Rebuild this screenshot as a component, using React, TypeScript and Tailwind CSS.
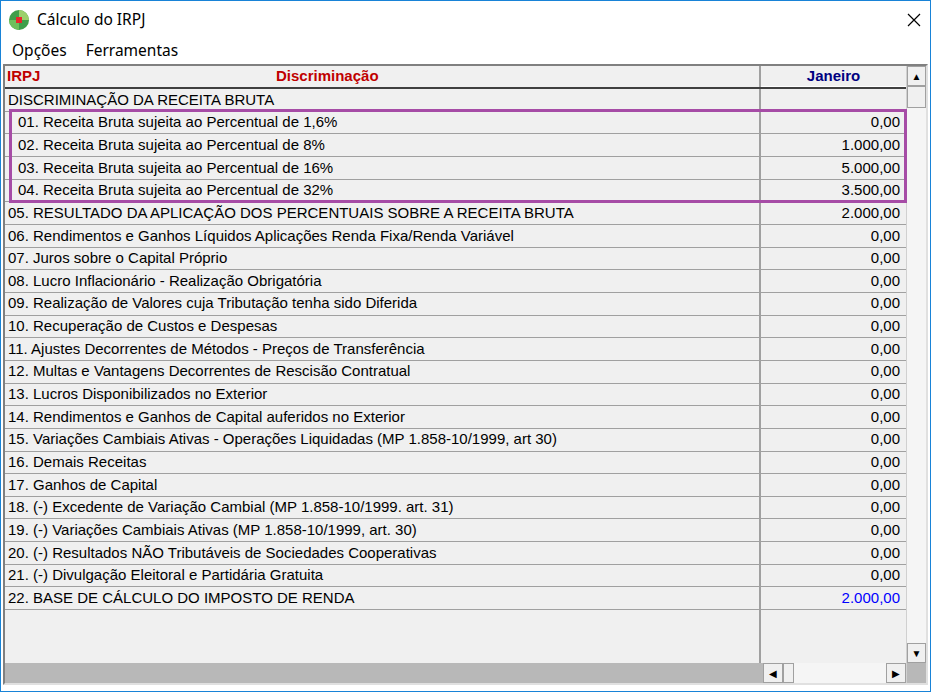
import React from "react";

const rows: [string, string, boolean?][] = [
  ["01. Receita Bruta sujeita ao Percentual de 1,6%", "0,00"],
  ["02. Receita Bruta sujeita ao Percentual de 8%", "1.000,00"],
  ["03. Receita Bruta sujeita ao Percentual de 16%", "5.000,00"],
  ["04. Receita Bruta sujeita ao Percentual de 32%", "3.500,00"],
  ["05. RESULTADO DA APLICAÇÃO DOS PERCENTUAIS SOBRE A RECEITA BRUTA", "2.000,00"],
  ["06. Rendimentos e Ganhos Líquidos Aplicações Renda Fixa/Renda Variável", "0,00"],
  ["07. Juros sobre o Capital Próprio", "0,00"],
  ["08. Lucro Inflacionário - Realização Obrigatória", "0,00"],
  ["09. Realização de Valores cuja Tributação tenha sido Diferida", "0,00"],
  ["10. Recuperação de Custos e Despesas", "0,00"],
  ["11. Ajustes Decorrentes de Métodos - Preços de Transferência", "0,00"],
  ["12. Multas e Vantagens Decorrentes de Rescisão Contratual", "0,00"],
  ["13. Lucros Disponibilizados no Exterior", "0,00"],
  ["14. Rendimentos e Ganhos de Capital auferidos no Exterior", "0,00"],
  ["15. Variações Cambiais Ativas - Operações Liquidadas (MP 1.858-10/1999, art 30)", "0,00"],
  ["16. Demais Receitas", "0,00"],
  ["17. Ganhos de Capital", "0,00"],
  ["18. (-) Excedente de Variação Cambial (MP 1.858-10/1999. art. 31)", "0,00"],
  ["19. (-) Variações Cambiais Ativas (MP 1.858-10/1999, art. 30)", "0,00"],
  ["20. (-) Resultados NÃO Tributáveis de Sociedades Cooperativas", "0,00"],
  ["21. (-) Divulgação Eleitoral e Partidária Gratuita", "0,00"],
  ["22. BASE DE CÁLCULO DO IMPOSTO DE RENDA", "2.000,00", true],
];

function Row({ label, value, blue, indent }: { label: string; value: string; blue?: boolean; indent?: boolean }) {
  return (
    <div className="flex h-[22.67px] border-b border-[#a0a0a0] box-border">
      <div className={`w-[756px] border-r-2 border-[#a0a0a0] flex items-center whitespace-nowrap overflow-hidden ${indent ? "pl-[13px]" : "pl-[3px]"}`}>{label}</div>
      <div className={`flex-1 flex items-center justify-end pr-[6px] ${blue ? "text-[#0000ff]" : ""}`}>{value}</div>
    </div>
  );
}

export default function App() {
  return (
    <div className="w-[931px] h-[692px] bg-white border border-[#1883d7] box-border flex flex-col text-[15px] text-black" style={{ fontFamily: "'Liberation Sans', Arial, sans-serif" }}>
      <div className="h-[37px] flex items-center pl-[7px] shrink-0" style={{ fontFamily: "'Noto Sans', sans-serif" }}>
        <svg width="22" height="22" viewBox="0 0 22 22">
          <circle cx="11" cy="11" r="10" fill="#3f9e4a" />
          <path d="M11 1 A10 10 0 0 1 21 11 L11 11Z" fill="#9bd06b" />
          <path d="M1 11 A10 10 0 0 0 11 21 L11 11Z" fill="#6fbf5c" />
          <rect x="8" y="8" width="6" height="6" fill="#e8262b" />
        </svg>
        <span className="ml-[7px] text-[15.5px]">Cálculo do IRPJ</span>
        <div className="flex-1" />
        <svg width="14" height="14" viewBox="0 0 14 14" className="mr-[9px]"><path d="M1 1L13 13M13 1L1 13" stroke="#000" strokeWidth="1.2" /></svg>
      </div>
      <div className="h-[26px] flex items-center gap-[19px] pl-[11px] text-[15.5px] shrink-0" style={{ fontFamily: "'Noto Sans', sans-serif" }}>
        <span>Opções</span><span>Ferramentas</span>
      </div>
      <div className="flex-1 mx-[2px] mb-[6px] border-2 border-[#808080] border-r-[#e0e0e0] border-b-[#e0e0e0] bg-[#f0f0f0] flex relative" style={{ fontFamily: "'Liberation Sans', Arial, sans-serif" }}>
        <div className="w-[901px] flex flex-col text-[15px]">
          <div className="flex h-[23px] border-b-2 border-[#404040] bg-[#f0f0f0] font-bold">
            <div className="w-[756px] border-r-2 border-[#a0a0a0] flex items-center pl-[2px] text-[#c00000] relative">
              IRPJ
              <span className="absolute left-[271px]">Discriminação</span>
            </div>
            <div className="flex-1 flex items-center justify-center text-[#000080] border-b border-white">Janeiro</div>
          </div>
          <Row label="DISCRIMINAÇÃO DA RECEITA BRUTA" value="" />
          {rows.map(([l, v, b], i) => (
            <Row key={i} label={l} value={v} blue={b} indent={i < 4} />
          ))}
          <div className="flex flex-1">
            <div className="w-[756px] border-r-2 border-[#a0a0a0]" />
          </div>
          <div className="h-[20px] flex bg-[#b8b8b8]">
            <div className="w-[758px]" />
            <div className="flex-1 flex bg-[#f5f5f5]">
              <div className="w-[20px] border border-[#a0a0a0] bg-[#f0f0f0] flex items-center justify-center text-[10px]">◀</div>
              <div className="w-[11px] border border-[#a0a0a0] bg-[#f0f0f0]" />
              <div className="flex-1" />
              <div className="w-[20px] border border-[#a0a0a0] bg-[#f0f0f0] flex items-center justify-center text-[10px]">▶</div>
            </div>
          </div>
        </div>
        <div className="flex-1 flex flex-col bg-[#f5f5f5] border-l border-[#d0d0d0]">
          <div className="h-[20px] border border-[#a0a0a0] bg-[#f0f0f0] flex items-center justify-center text-[10px]">▲</div>
          <div className="h-[22px] border border-[#a0a0a0] bg-[#f0f0f0]" />
          <div className="flex-1" />
          <div className="h-[20px] border border-[#a0a0a0] bg-[#f0f0f0] flex items-center justify-center text-[10px]">▼</div>
          <div className="h-[20px] bg-[#b8b8b8]" />
        </div>
        <div className="absolute left-[4px] top-[43px] w-[898px] h-[94px] border-[3px] border-[#a64ca6] pointer-events-none" />
      </div>
    </div>
  );
}
